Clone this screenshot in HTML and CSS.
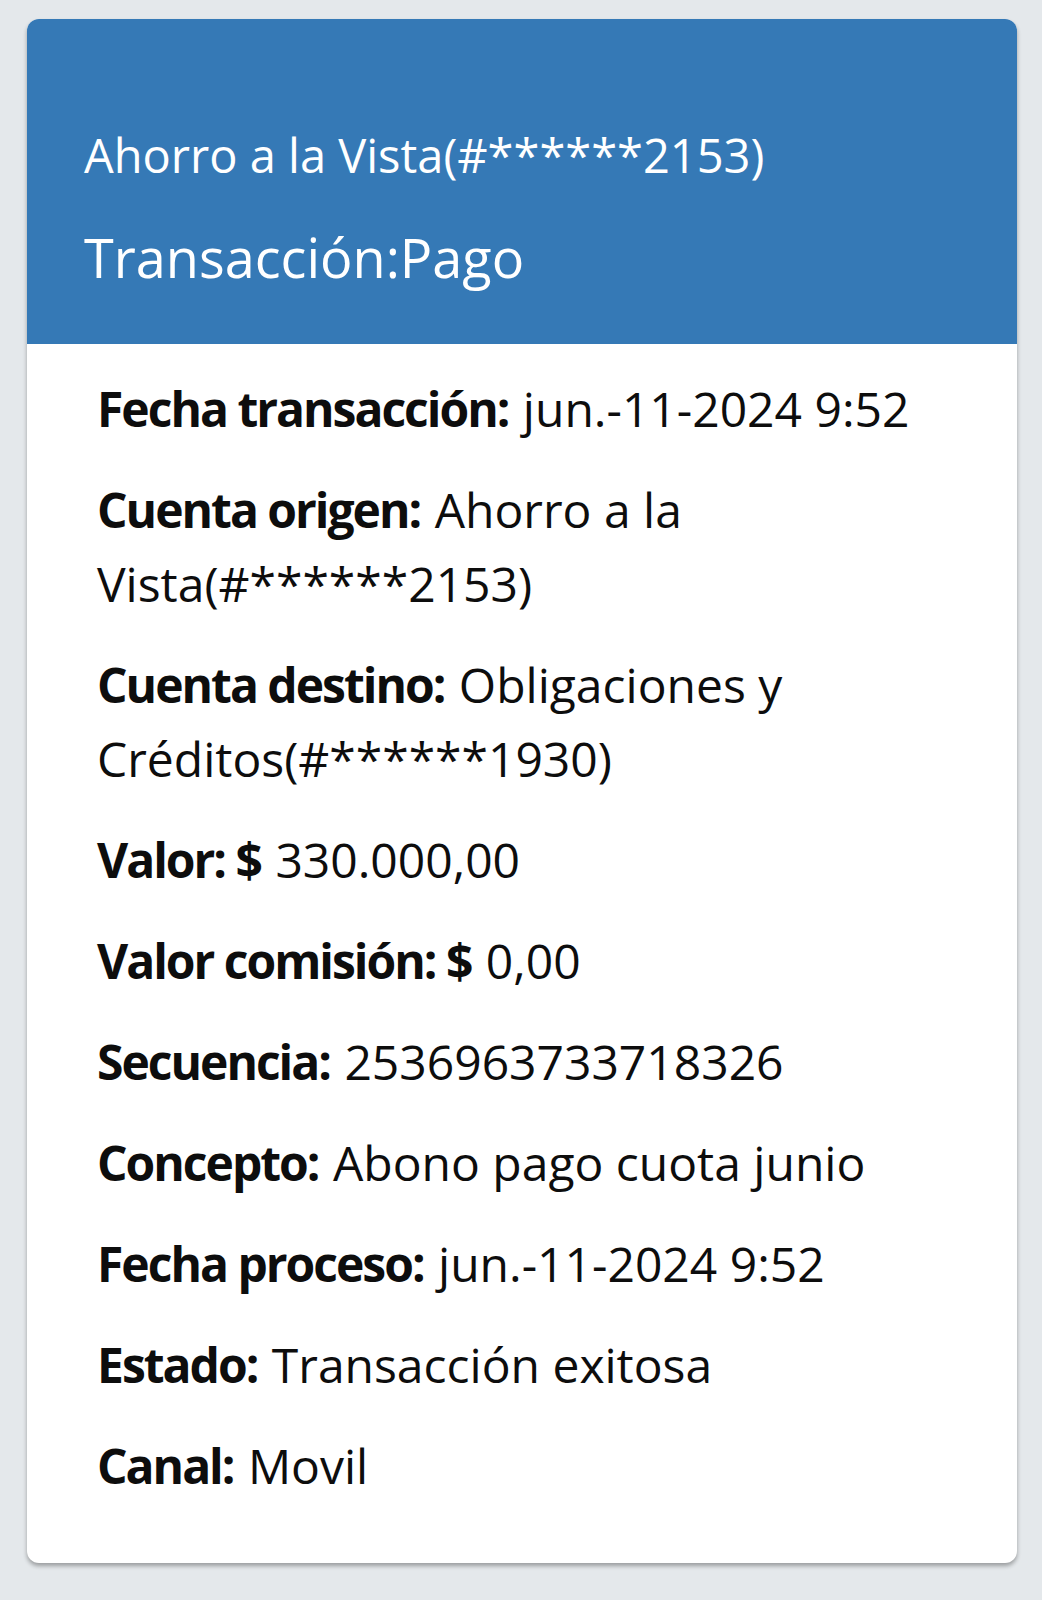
FILE: index.html
```html
<!DOCTYPE html>
<html lang="es">
<head>
<meta charset="utf-8">
<title>Detalle de transacción</title>
<link rel="stylesheet" href="styles.css">
</head>
<body>
<div class="page">
  <div class="card">
    <div class="card-header">
      <div class="account">Ahorro a la Vista(#******2153)</div>
      <div class="tx-type">Transacción:Pago</div>
    </div>
    <div class="card-body">
      <p class="row"><b>Fecha transacción:</b> jun.-11-2024 9:52</p>
      <p class="row"><b>Cuenta origen:</b> Ahorro a la Vista(#******2153)</p>
      <p class="row"><b>Cuenta destino:</b> Obligaciones y Créditos(#******1930)</p>
      <p class="row"><b>Valor: $</b> 330.000,00</p>
      <p class="row"><b>Valor comisión: $</b> 0,00</p>
      <p class="row"><b>Secuencia:</b> 2536963733718326</p>
      <p class="row"><b>Concepto:</b> Abono pago cuota junio</p>
      <p class="row"><b>Fecha proceso:</b> jun.-11-2024 9:52</p>
      <p class="row"><b>Estado:</b> Transacción exitosa</p>
      <p class="row"><b>Canal:</b> Movil</p>
    </div>
  </div>
</div>
</body>
</html>
```

FILE: styles.css
```css
html, body {
  margin: 0;
  padding: 0;
  background: #e4e8eb;
}
body {
  font-family: "Open Sans", "Noto Sans", sans-serif;
  color: #0d0d0d;
}
.page {
  padding: 19px 25px 40px 27px;
}
.card {
  width: 990px;
  background: #fff;
  border-radius: 12px;
  box-shadow: 0 3px 4px rgba(0, 0, 0, 0.32);
  overflow: hidden;
}
.card-header {
  background: #3579b6;
  color: #fff;
  padding: 103px 20px 52px 57px;
}
.account {
  font-size: 47px;
  line-height: 66px;
}
.tx-type {
  font-size: 54px;
  line-height: 70px;
  margin-top: 34px;
}
.card-body {
  padding: 28px 70px 33px 70px;
}
.row {
  margin: 0 0 27px 0;
  font-size: 48px;
  line-height: 74px;
}
.row b {
  font-weight: 700;
  letter-spacing: -2px;
  padding-right: 2px;
}
```
